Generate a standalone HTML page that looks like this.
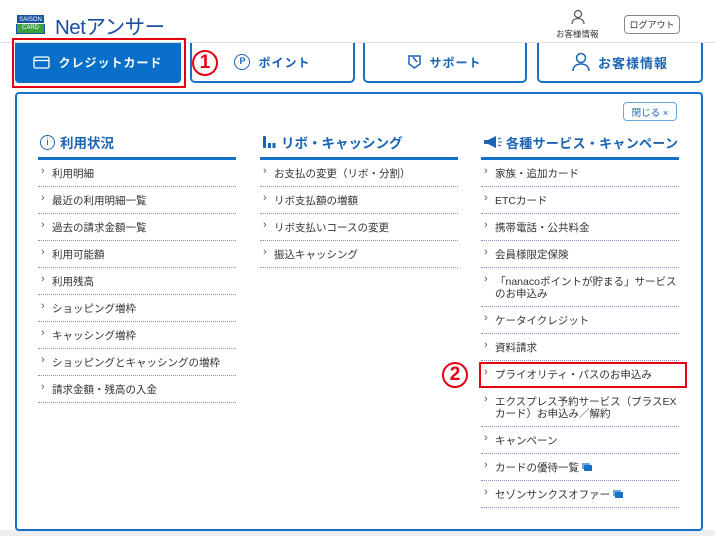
<!DOCTYPE html>
<html><head><meta charset="utf-8"><style>
*{margin:0;padding:0;box-sizing:border-box}
body{width:715px;height:536px;background:#fff;font-family:"Liberation Sans","Noto Sans CJK JP",sans-serif;position:relative;overflow:hidden;color:#333}
.abs{position:absolute}
.tab{position:absolute;top:43px;height:40px;border:2px solid #1672c8;border-radius:0 0 5px 5px;border-top:none;background:#fff;color:#1a64b4;font-weight:bold;font-size:12px;display:flex;align-items:center;justify-content:center;gap:8px;letter-spacing:1px}
.panel{position:absolute;left:15px;top:92px;width:688px;height:439px;border:2px solid #1672c8;border-radius:4px;background:#fff}
.col{position:absolute;top:131px;width:198px}
.col h3{font-size:13.5px;color:#1a64b4;border-bottom:3px solid #1672c8;display:flex;align-items:center;gap:5px;padding-left:2px;padding-bottom:4px;font-weight:bold;height:29px;white-space:nowrap}
.col ul{list-style:none}
.col li{font-size:10.5px;line-height:12px;padding:8px 0 6px 14px;border-bottom:1px dotted #8a8ac8;position:relative;min-height:27px;color:#333}
.col li:before{content:"›";position:absolute;left:3px;top:5px;font-size:11px;color:#555}
.ext{display:inline-block;width:8px;height:6px;background:#1672c8;margin-left:5px;vertical-align:middle;box-shadow:-2px -2px 0 0 #6aa6e0}
.circ{position:absolute;width:26px;height:26px;border:2px solid #e60012;border-radius:50%;color:#e60012;font-weight:bold;font-size:19px;display:flex;align-items:center;justify-content:center}
</style></head><body>
<div class="abs" style="left:16px;top:14px;width:29px;height:20px;background:#1a4fa0;"></div>
<div class="abs" style="left:16px;top:14px;width:29px;height:10px;color:#fff;font-size:6px;line-height:10px;text-align:center;background:#1a4fa0;border:1px solid #fff">SAISON</div>
<div class="abs" style="left:17px;top:24px;width:27px;height:9px;color:#fff;font-size:6px;line-height:9px;text-align:center;background:#3aa040">CARD</div>
<div class="abs" style="left:55px;top:10px;font-size:20.5px;color:#1a4fa0;letter-spacing:-0.5px">Netアンサー</div>
<svg class="abs" style="left:570px;top:9px" width="16" height="16" viewBox="0 0 16 16"><circle cx="8" cy="5" r="3.5" fill="none" stroke="#555" stroke-width="1.2"/><path d="M2 15c0-4 3-5.5 6-5.5s6 1.5 6 5.5" fill="none" stroke="#555" stroke-width="1.2"/></svg>
<div class="abs" style="left:556px;top:28px;font-size:8.5px;color:#333">お客様情報</div>
<div class="abs" style="left:624px;top:15px;width:56px;height:19px;border:1px solid #888;border-radius:4px;font-size:9px;display:flex;align-items:center;justify-content:center;color:#333">ログアウト</div>
<div class="abs" style="left:0;top:42px;width:715px;height:1px;background:#ddd"></div>
<div class="abs" style="left:0;top:530px;width:715px;height:6px;background:#eee"></div>

<div class="tab" style="left:15px;width:166px;background:#0a6fc9;color:#fff;border-color:#0a6fc9;border-radius:0 0 4px 4px">
<svg width="17" height="13" viewBox="0 0 17 13"><rect x="1" y="1" width="15" height="11" rx="1.5" fill="none" stroke="#fff" stroke-width="1.3"/><line x1="1" y1="4.5" x2="16" y2="4.5" stroke="#fff" stroke-width="1.3"/></svg>クレジットカード</div>
<div class="abs" style="left:12px;top:38px;width:174px;height:50px;border:2px solid #e60012"></div>
<div class="tab" style="left:190px;width:165px"><span style="display:inline-block;width:16px;height:16px;border:1.5px solid #1a64b4;border-radius:50%;font-size:9px;line-height:13px;text-align:center;letter-spacing:0">P</span>ポイント</div>
<div class="circ" style="left:192px;top:50px">1</div>
<div class="tab" style="left:363px;width:164px"><svg width="13" height="14" viewBox="0 0 13 14"><path d="M1 1h11v8l-5.5 4L1 9z" fill="none" stroke="#1a64b4" stroke-width="1.5"/><path d="M5 2l4 5" stroke="#1a64b4" stroke-width="1.5"/></svg>サポート</div>
<div class="tab" style="left:537px;width:166px;font-size:13px"><svg width="18" height="20" viewBox="0 0 18 20"><circle cx="9" cy="6" r="4.5" fill="none" stroke="#1a64b4" stroke-width="1.5"/><path d="M1 19c0-5 4-7 8-7s8 2 8 7" fill="none" stroke="#1a64b4" stroke-width="1.5"/></svg>お客様情報</div>

<div class="panel"></div>
<div class="abs" style="left:623px;top:102px;width:54px;height:19px;border:1px solid #6aa6e0;border-radius:4px;font-size:9.5px;color:#1a64b4;display:flex;align-items:center;justify-content:center">閉じる ×</div>

<div class="col" style="left:38px"><h3><span style="display:inline-block;width:15px;height:15px;border:1.3px solid #1a64b4;border-radius:50%;font-size:10px;line-height:13px;text-align:center;font-weight:normal">i</span>利用状況</h3>
<ul><li>利用明細</li><li>最近の利用明細一覧</li><li>過去の請求金額一覧</li><li>利用可能額</li><li>利用残高</li><li>ショッピング増枠</li><li>キャッシング増枠</li><li>ショッピングとキャッシングの増枠</li><li>請求金額・残高の入金</li></ul></div>

<div class="col" style="left:260px"><h3><svg width="14" height="14" viewBox="0 0 14 14"><rect x="1" y="1" width="3" height="12" rx="1" fill="#1a64b4"/><rect x="6" y="8" width="3" height="5" fill="#1a64b4"/><rect x="10.5" y="8" width="3" height="5" fill="#1a64b4"/></svg>リボ・キャッシング</h3>
<ul><li>お支払の変更（リボ・分割）</li><li>リボ支払額の増額</li><li>リボ支払いコースの変更</li><li>振込キャッシング</li></ul></div>

<div class="col" style="left:481px"><h3 style="font-size:13px;gap:3px;letter-spacing:0.3px"><svg width="20" height="12" viewBox="0 0 20 12"><path d="M1 4h4l8-4v12l-8-4H1z" fill="#1a64b4"/><path d="M15 3l3-1M15 6h4M15 9l3 1" stroke="#1a64b4" stroke-width="1"/></svg>各種サービス・キャンペーン</h3>
<ul><li>家族・追加カード</li><li>ETCカード</li><li>携帯電話・公共料金</li><li>会員様限定保険</li><li>「nanacoポイントが貯まる」サービスのお申込み</li><li>ケータイクレジット</li><li>資料請求</li><li>プライオリティ・パスのお申込み</li><li>エクスプレス予約サービス（プラスEXカード）お申込み／解約</li><li>キャンペーン</li><li>カードの優待一覧<span class="ext"></span></li><li>セゾンサンクスオファー<span class="ext"></span></li></ul></div>
<div class="abs" style="left:479px;top:362px;width:208px;height:26px;border:2px solid #e60012"></div>
<div class="circ" style="left:442px;top:362px">2</div>
</body></html>
